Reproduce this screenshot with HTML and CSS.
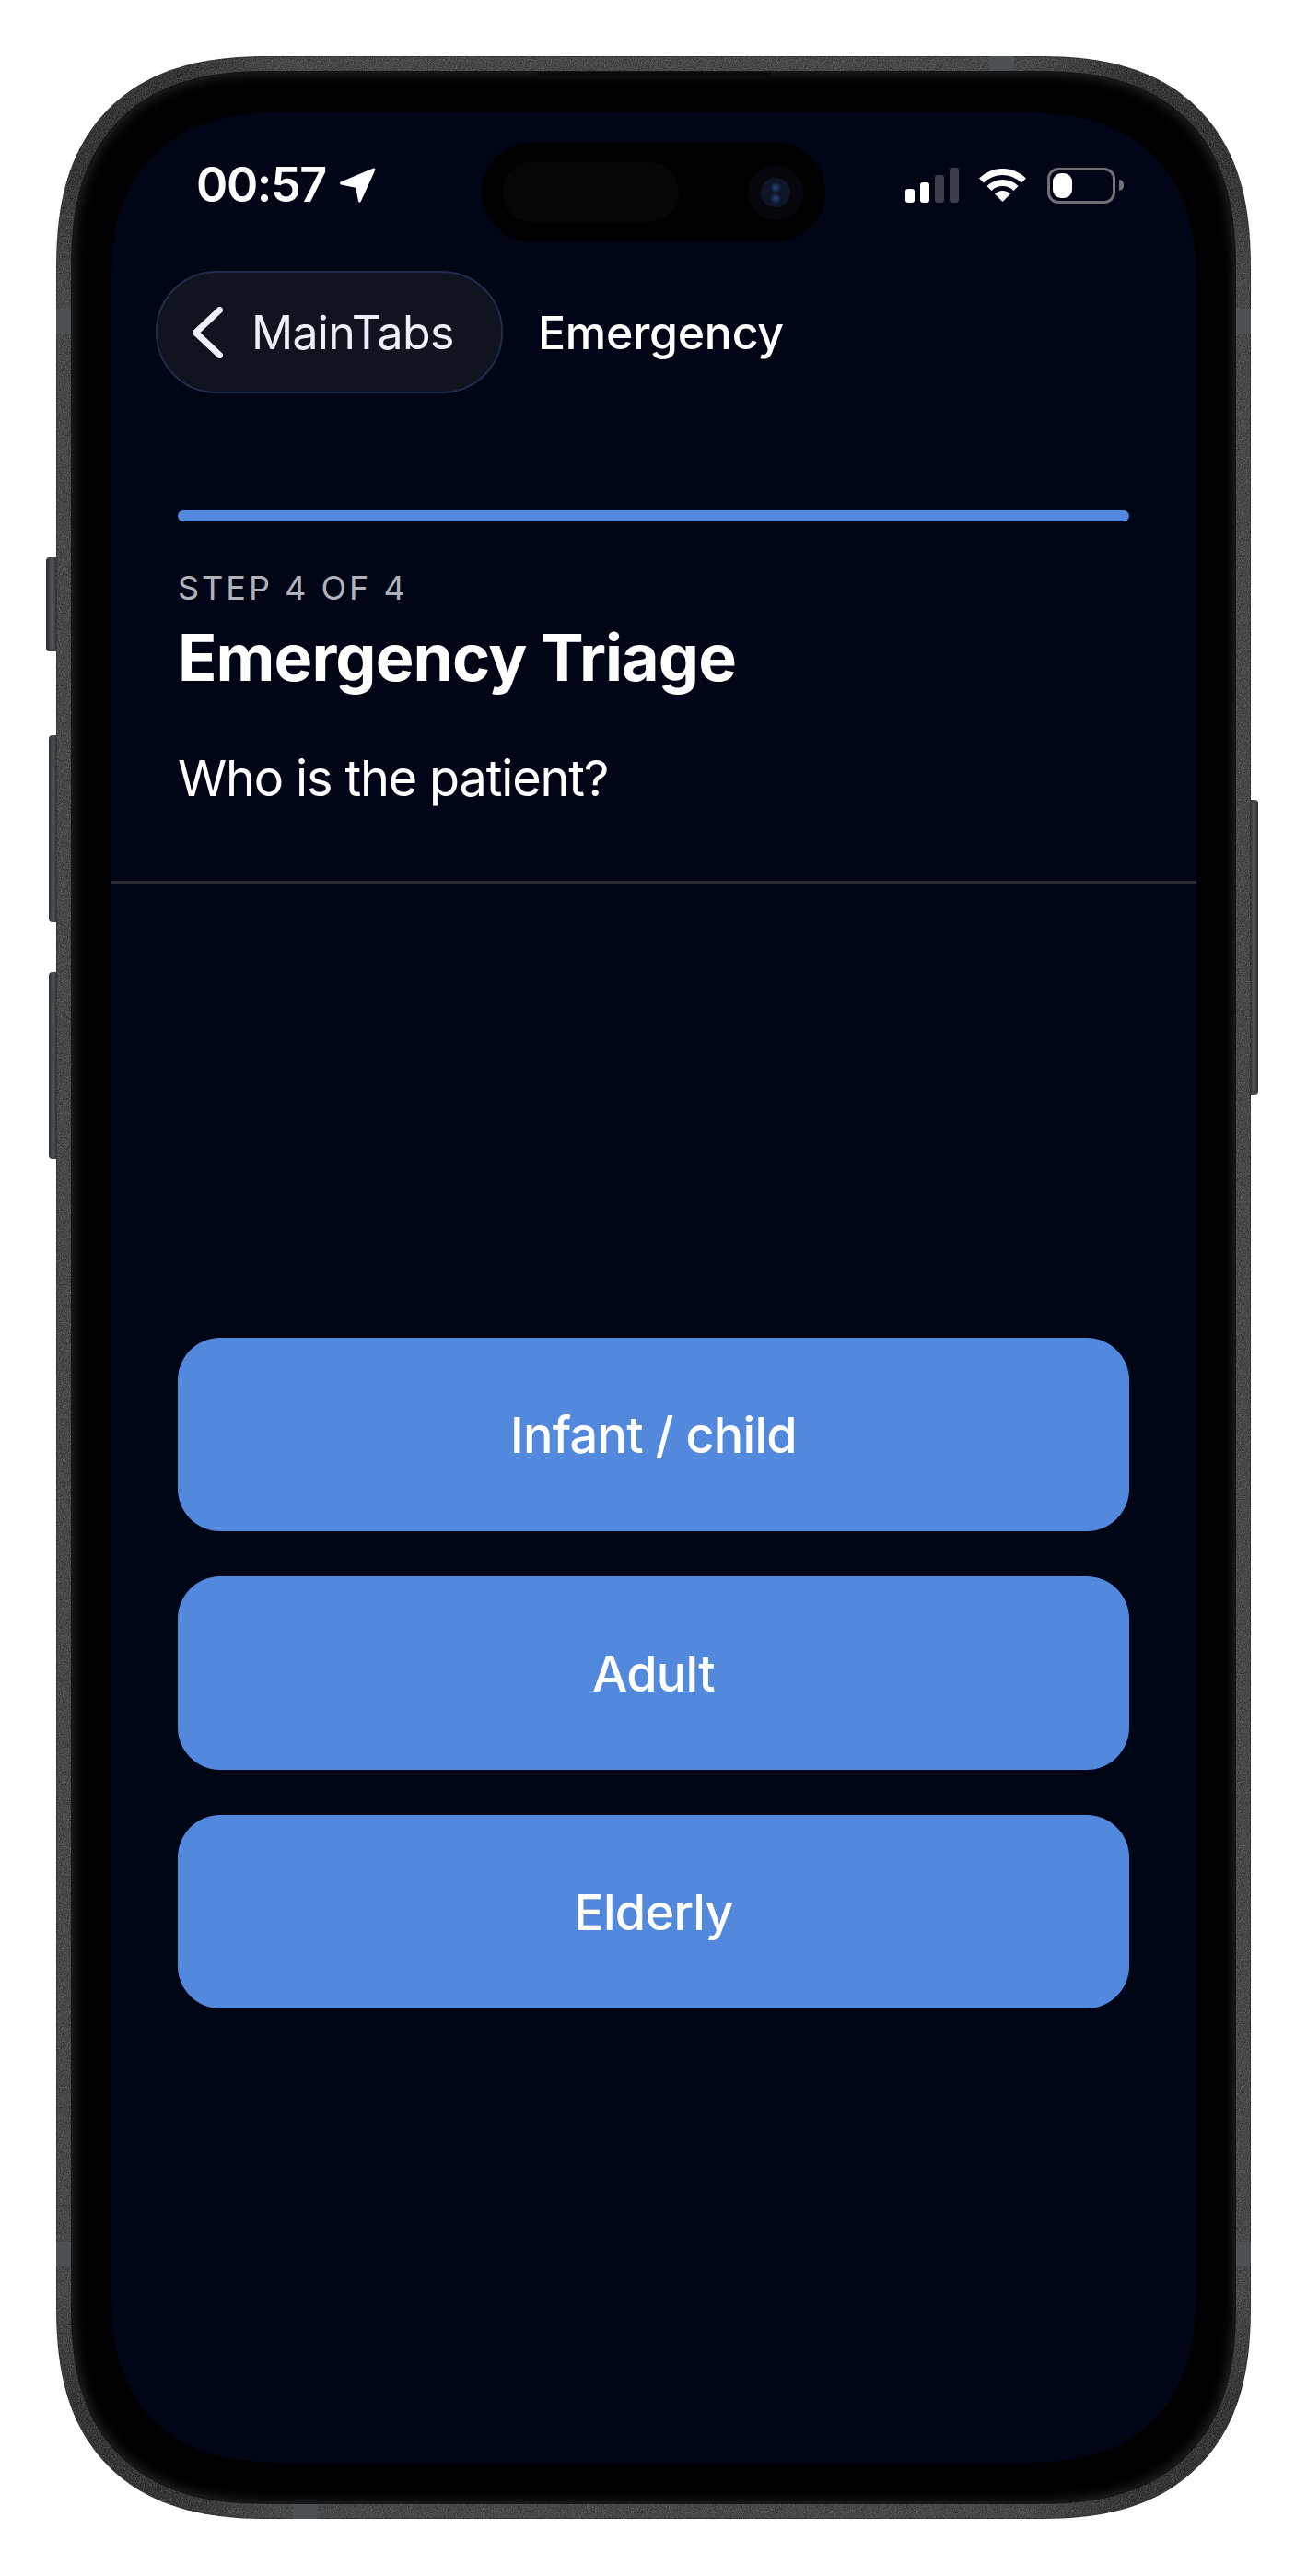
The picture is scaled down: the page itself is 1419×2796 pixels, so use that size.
FILE: index.html
```html
<!DOCTYPE html>
<html lang="en">
<head>
    <meta charset="UTF-8">
    <meta name="viewport" content="width=device-width, initial-scale=1.0">
    <title>Emergency Triage</title>
    <link rel="stylesheet" href="styles.css">
</head>
<body>
    <div class="phone">
        <span class="side-btn action"></span>
        <span class="side-btn vol-up"></span>
        <span class="side-btn vol-down"></span>
        <span class="side-btn power"></span>

        <div class="frame">
            <svg class="grain" width="100%" height="100%">
                <filter id="noise">
                    <feTurbulence type="fractalNoise" baseFrequency="0.9" numOctaves="2" seed="4"/>
                    <feColorMatrix values="0 0 0 0 1  0 0 0 0 1  0 0 0 0 1  0 0 0 0.45 -0.12"/>
                </filter>
                <rect width="100%" height="100%" filter="url(#noise)"/>
            </svg>
            <span class="band band-top"></span>
            <span class="band band-bottom"></span>
            <span class="band band-left"></span>
            <span class="band band-right"></span>
            <span class="band band-left-low"></span>
            <span class="band band-right-low"></span>
        </div>

        <div class="bezel">
            <span class="speaker"></span>
            <div class="screen">
                <div class="island">
                    <span class="sensor"></span>
                    <span class="camera"><span class="lens"></span></span>
                </div>

                <div class="status-bar">
                    <div class="status-left">
                        <span class="time">00:57</span>
                        <svg class="location" viewBox="0 0 40 38">
                            <path d="M38 2 L2.5 17 L19.5 20.5 L22.5 36 Z" fill="#fff" stroke="#fff" stroke-width="3" stroke-linejoin="round"/>
                        </svg>
                    </div>
                    <div class="status-right">
                        <div class="signal">
                            <span class="bar b1"></span>
                            <span class="bar b2"></span>
                            <span class="bar b3 off"></span>
                            <span class="bar b4 off"></span>
                        </div>
                        <svg class="wifi" viewBox="0 0 51 36">
                            <path fill="#fff" d="M0 10.54 A36 36 0 0 1 51 10.54 L46 15.5 A29 29 0 0 0 5 15.5 Z"/>
                            <path fill="#fff" d="M8.5 19 A24 24 0 0 1 42.5 19 L37.5 24 A17 17 0 0 0 13.5 24 Z"/>
                            <path fill="#fff" d="M17 27.5 A12 12 0 0 1 34 27.5 L25.5 36 Z"/>
                        </svg>
                        <div class="battery">
                            <span class="battery-level"></span>
                        </div>
                        <span class="battery-nub"></span>
                    </div>
                </div>

                <div class="nav">
                    <div class="back-btn">
                        <svg class="chevron" viewBox="0 0 33 56">
                            <path d="M29.5 3.5 L3.5 28 L29.5 52.5" fill="none" stroke="#eef0f8" stroke-width="7" stroke-linecap="round" stroke-linejoin="round"/>
                        </svg>
                        <span>MainTabs</span>
                    </div>
                    <div class="nav-title">Emergency</div>
                </div>

                <div class="header">
                    <div class="progress"></div>
                    <div class="step">STEP 4 OF 4</div>
                    <h1>Emergency Triage</h1>
                    <p class="question">Who is the patient?</p>
                </div>

                <div class="options">
                    <div class="option">Infant / child</div>
                    <div class="option">Adult</div>
                    <div class="option">Elderly</div>
                </div>
            </div>
        </div>
    </div>
</body>
</html>
```

FILE: styles.css
```css
* {
    box-sizing: border-box;
}
body {
    margin: 0;
    height: 2796px;
    background-color: #fff;
    font-family: Inter, "Liberation Sans", sans-serif;
    overflow: hidden;
}

/* device frame */
.phone {
    position: relative;
    width: 1297px;
    height: 2673px;
    margin: 61px auto 0;
    padding: 17px;
}
.frame {
    position: absolute;
    inset: 0;
    border-radius: 232px;
    corner-shape: superellipse(1.3);
    overflow: hidden;
    background:
        radial-gradient(circle at 0 0, #1d1e1f 130px, transparent 240px),
        radial-gradient(circle at 100% 0, #1d1e1f 130px, transparent 240px),
        radial-gradient(circle at 0 100%, #1d1e1f 130px, transparent 240px),
        radial-gradient(circle at 100% 100%, #1d1e1f 130px, transparent 240px),
        #303234;
    box-shadow: inset 0 0 0 1px #1c1d1e;
}
.grain {
    display: block;
}
.bezel {
    position: relative;
    height: 100%;
    padding: 44px 42px 44px;
    border-radius: 215px;
    corner-shape: superellipse(1.3);
    background: #000;
    box-shadow: 0 0 0 1px #141516, inset 0 0 14px 1px #2a2c2e;
}
.speaker {
    position: absolute;
    top: 0;
    left: 505px;
    width: 254px;
    height: 8px;
    border-radius: 0 0 6px 6px;
    background: #0a0a0b;
}
.side-btn {
    position: absolute;
    width: 11px;
    background: linear-gradient(to right, #2a2b2d, #55585b 60%, #333537);
    border-radius: 4px 0 0 4px;
}
.action {
    left: -11px;
    top: 544px;
    height: 102px;
}
.vol-up {
    left: -8px;
    width: 8px;
    top: 737px;
    height: 203px;
}
.vol-down {
    left: -8px;
    width: 8px;
    top: 994px;
    height: 203px;
}
.power {
    right: -8px;
    width: 8px;
    top: 807px;
    height: 320px;
    border-radius: 0 4px 4px 0;
    background: linear-gradient(to left, #2a2b2d, #55585b 60%, #333537);
}
.band {
    position: absolute;
    background: #4c5153;
}
.band-top {
    top: 0;
    left: 1013px;
    width: 27px;
    height: 17px;
}
.band-bottom {
    bottom: 0;
    left: 257px;
    width: 26px;
    height: 17px;
}
.band-left,
.band-right,
.band-left-low,
.band-right-low {
    width: 17px;
    height: 27px;
}
.band-left {
    left: 0;
    top: 274px;
}
.band-right {
    right: 0;
    top: 274px;
}
.band-left-low {
    left: 0;
    top: 2372px;
}
.band-right-low {
    right: 0;
    top: 2372px;
}

/* screen */
.screen {
    position: relative;
    display: flex;
    flex-direction: column;
    height: 100%;
    border-radius: 190px;
    corner-shape: superellipse(1.3);
    background-color: #010617;
    color: #fff;
    overflow: hidden;
}
.island {
    position: absolute;
    top: 32px;
    left: 403px;
    width: 373px;
    height: 109px;
    border-radius: 55px;
    background: #000;
}
.sensor {
    position: absolute;
    left: 22px;
    top: 22px;
    width: 192px;
    height: 65px;
    border-radius: 32px;
    background: #060606;
}
.camera {
    position: absolute;
    left: 289px;
    top: 25px;
    width: 60px;
    height: 60px;
    border-radius: 50%;
    background: #05070d;
}
.lens {
    position: absolute;
    left: 14px;
    top: 14px;
    width: 32px;
    height: 32px;
    border-radius: 50%;
    background:
        radial-gradient(circle at 50% 33%, #27457f 0, transparent 6px),
        radial-gradient(circle at 50% 70%, #27457f 0, transparent 6px),
        #0d1526;
}

.status-bar {
    display: flex;
    justify-content: space-between;
    align-items: flex-start;
    height: 172px;
    padding: 59px 79px 0 93px;
}
.status-left {
    display: flex;
    align-items: center;
    gap: 14px;
    height: 40px;
}
.time {
    font-size: 52px;
    font-weight: 570;
    line-height: 40px;
    letter-spacing: -1.4px;
}
.location {
    width: 40px;
    height: 38px;
}
.status-right {
    display: flex;
    align-items: center;
    height: 40px;
}
.signal {
    display: flex;
    align-items: flex-end;
    gap: 6px;
    height: 38px;
    margin-right: 22px;
}
.bar {
    width: 10px;
    border-radius: 3px;
    background: #fff;
}
.bar.off {
    background: #3a3f4a;
}
.b1 {
    height: 15px;
}
.b2 {
    height: 22px;
}
.b3 {
    height: 30px;
}
.b4 {
    height: 38px;
}
.wifi {
    width: 51px;
    height: 36px;
    margin-right: 23px;
}
.battery {
    width: 74px;
    height: 39px;
    padding: 3px;
    border: 3px solid #6e7075;
    border-radius: 12px;
}
.battery-level {
    display: block;
    width: 21px;
    height: 100%;
    border-radius: 9px;
    background: #fff;
}
.battery-nub {
    width: 5px;
    height: 12px;
    margin-left: 4px;
    border-radius: 0 6px 6px 0;
    background: #6e7075;
}

.nav {
    display: flex;
    align-items: center;
    gap: 38px;
    padding-left: 49px;
}
.back-btn {
    display: flex;
    align-items: center;
    gap: 31px;
    width: 377px;
    height: 133px;
    padding-left: 38px;
    border: 2px solid #1f2d4d;
    border-radius: 66px;
    background-color: #10141f;
    color: #eef0f8;
    font-size: 50px;
    letter-spacing: -0.7px;
}
.chevron {
    width: 33px;
    height: 56px;
}
.nav-title {
    font-size: 50px;
    font-weight: 530;
    letter-spacing: -0.3px;
}

.header {
    padding: 127px 73px 0;
    height: 532px;
    border-bottom: 3px solid #2b2d33;
}
.progress {
    height: 12px;
    border-radius: 6px;
    background-color: #5289dc;
}
.step {
    margin-top: 50px;
    color: #b0b3ba;
    font-size: 36px;
    line-height: 44px;
    letter-spacing: 3px;
}
h1 {
    margin: 12px 0 0;
    font-size: 70px;
    font-weight: 700;
    line-height: 84px;
    letter-spacing: -0.9px;
}
.question {
    margin: 56px 0 0;
    font-size: 54px;
    font-weight: 380;
    line-height: 66px;
    letter-spacing: -1.15px;
}

.options {
    flex: 1;
    display: flex;
    flex-direction: column;
    justify-content: center;
    gap: 49px;
    padding: 0 73px;
}
.option {
    display: flex;
    align-items: center;
    justify-content: center;
    height: 210px;
    border-radius: 46px;
    background-color: #5289dc;
    font-size: 54px;
    font-weight: 530;
    letter-spacing: -0.75px;
}
```
